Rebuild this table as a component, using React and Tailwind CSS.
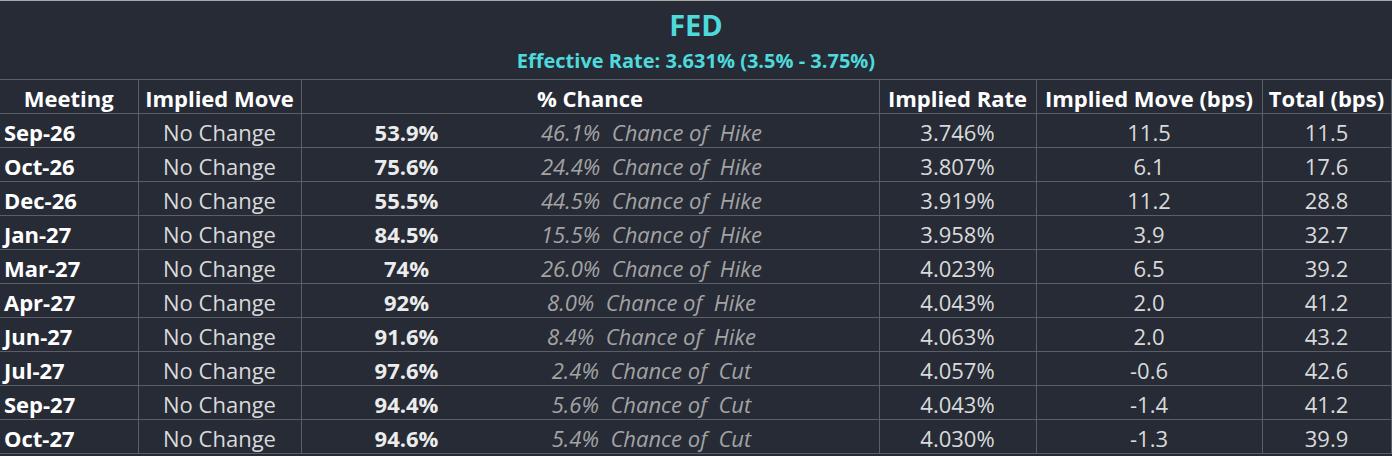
const rows = [
  ['Sep-26', '53.9%', '46.1%', 'Hike', '3.746%', '11.5', '11.5'],
  ['Oct-26', '75.6%', '24.4%', 'Hike', '3.807%', '6.1', '17.6'],
  ['Dec-26', '55.5%', '44.5%', 'Hike', '3.919%', '11.2', '28.8'],
  ['Jan-27', '84.5%', '15.5%', 'Hike', '3.958%', '3.9', '32.7'],
  ['Mar-27', '74%', '26.0%', 'Hike', '4.023%', '6.5', '39.2'],
  ['Apr-27', '92%', '8.0%', 'Hike', '4.043%', '2.0', '41.2'],
  ['Jun-27', '91.6%', '8.4%', 'Hike', '4.063%', '2.0', '43.2'],
  ['Jul-27', '97.6%', '2.4%', 'Cut', '4.057%', '-0.6', '42.6'],
  ['Sep-27', '94.4%', '5.6%', 'Cut', '4.043%', '-1.4', '41.2'],
  ['Oct-27', '94.6%', '5.4%', 'Cut', '4.030%', '-1.3', '39.9'],
]

const cell = 'h-[34px] border border-[#5a5e65] p-0 pt-[2px] text-center align-middle'

export default function App() {
  return (
    <div
      className="h-[456px] w-[1392px] overflow-hidden bg-[#262b36] text-[22px] leading-none text-[#dadada]"
      style={{ fontFamily: '"Open Sans", "Noto Sans", sans-serif' }}
    >
      <div className="flex h-[80px] flex-col items-center border-t border-[#a8a8a8] pt-[9px] font-bold text-[#4fd9dc]">
        <div className="text-[29px]">FED</div>
        <div className="mt-[12px] text-[20px]">Effective Rate: 3.631% (3.5% - 3.75%)</div>
      </div>
      <table className="-mt-px w-[1391px] table-fixed border-collapse">
        <colgroup>
          <col className="w-[138px]" />
          <col className="w-[163px]" />
          <col className="w-[578px]" />
          <col className="w-[157px]" />
          <col className="w-[226px]" />
          <col className="w-[129px]" />
        </colgroup>
        <thead>
          <tr className="font-bold text-white">
            <th className={cell + ' border-l-0'}>Meeting</th>
            <th className={cell}>Implied Move</th>
            <th className={cell}>% Chance</th>
            <th className={cell}>Implied Rate</th>
            <th className={cell}>Implied Move (bps)</th>
            <th className={cell}>Total (bps)</th>
          </tr>
        </thead>
        <tbody>
          {rows.map((r) => (
            <tr key={r[0]}>
              <td className={cell + ' border-l-0 pl-[4px] text-left font-bold text-white'}>{r[0]}</td>
              <td className={cell}>No Change</td>
              <td className={cell}>
                <div className="grid grid-cols-[210px_280px_1fr]">
                  <span className="font-bold text-[#ececec]">{r[1]}</span>
                  <span className="whitespace-pre italic text-[#a3a3a3]">
                    {r[2] + '  Chance of  ' + r[3]}
                  </span>
                  <span />
                </div>
              </td>
              <td className={cell}>{r[4]}</td>
              <td className={cell}>{r[5]}</td>
              <td className={cell}>{r[6]}</td>
            </tr>
          ))}
        </tbody>
      </table>
    </div>
  )
}
